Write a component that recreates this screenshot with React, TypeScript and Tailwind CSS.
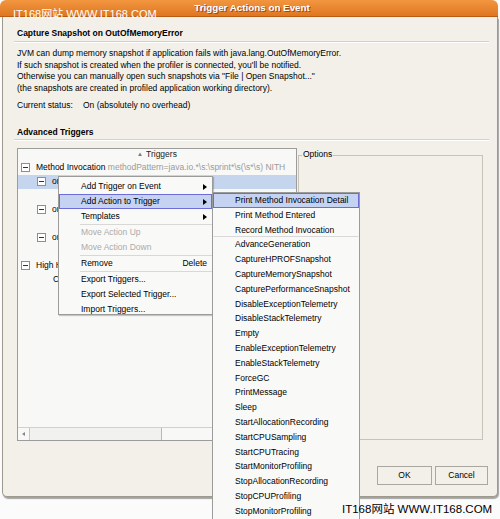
import React from 'react';

const actions = [
  'Print Method Invocation Detail',
  'Print Method Entered',
  'Record Method Invocation',
  'AdvanceGeneration',
  'CaptureHPROFSnapshot',
  'CaptureMemorySnapshot',
  'CapturePerformanceSnapshot',
  'DisableExceptionTelemetry',
  'DisableStackTelemetry',
  'Empty',
  'EnableExceptionTelemetry',
  'EnableStackTelemetry',
  'ForceGC',
  'PrintMessage',
  'Sleep',
  'StartAllocationRecording',
  'StartCPUSampling',
  'StartCPUTracing',
  'StartMonitorProfiling',
  'StopAllocationRecording',
  'StopCPUProfiling',
  'StopMonitorProfiling',
];

function Minus() {
  return (
    <span className="inline-flex w-[9px] h-[9px] shrink-0 items-center justify-center border border-[#8e8e8e] bg-white">
      <span className="w-[5px] h-px bg-[#333]" />
    </span>
  );
}

function Arrow() {
  return <span className="w-0 h-0 border-y-[3.5px] border-y-transparent border-l-[4px] border-l-black" />;
}

interface TreeRowProps {
  level: number;
  expander?: boolean;
  selected?: boolean;
  children?: React.ReactNode;
}

function TreeRow({ level, expander, selected, children }: TreeRowProps) {
  const indent = level === 0 ? 'pl-[3px]' : level === 1 ? 'pl-[19px]' : 'pl-[35px]';
  return (
    <div className={`h-[14px] flex items-center whitespace-nowrap overflow-hidden ${indent} ${selected ? 'bg-[#c6d5ee]' : ''}`}>
      {expander && <Minus />}
      <span className={expander ? 'ml-[6px]' : ''}>{children}</span>
    </div>
  );
}

function MenuItem({ label, hint, arrow, disabled, active }: { label: string; hint?: string; arrow?: boolean; disabled?: boolean; active?: boolean }) {
  return (
    <div
      className={`h-[15px] flex items-center pl-[21px] pr-[4px] border ${
        active ? 'bg-[#c5d2f2] border-[#6d6dd8]' : 'border-transparent'
      } ${disabled ? 'text-[#ababab]' : 'text-black'}`}
    >
      <span className="flex-1">{label}</span>
      {hint && <span>{hint}</span>}
      {arrow && <Arrow />}
    </div>
  );
}

export default function App() {
  return (
    <div className="relative w-[500px] h-[519px] overflow-hidden bg-[#fbfbfb] font-['Liberation_Sans',Arial,sans-serif] text-[8.5px] text-black">
      {/* Dialog */}
      <div className="w-[498px] h-[497px] flex flex-col">
        <div className="h-[17px] rounded-t-[6px] bg-gradient-to-b from-[#f2963f] to-[#e0761f] border-b border-[#b95b13] flex items-center justify-center">
          <span className="ml-[6px] text-white font-bold text-[9.8px] [text-shadow:1px_1px_0_#a04a0a]">Trigger Actions on Event</span>
        </div>
        <div className="flex-1 ml-[2px] flex flex-col bg-[#f2f0e9] border-x border-b border-[#9d998d] rounded-b-[5px] shadow-[1px_2px_1px_rgba(0,0,0,0.35)] pl-[11px] pr-[8px] pt-[10px]">
          <div className="pl-[3px] leading-[12px] font-bold">Capture Snapshot on OutOfMemoryError</div>
          <div className="mt-[2px] h-[2px] border-t border-[#d4d0c4] border-b border-b-white" />
          <div className="pl-[3px] mt-[5px] leading-[11.5px]">
            <div>JVM can dump memory snapshot if application fails with java.lang.OutOfMemoryError.</div>
            <div>If such snapshot is created when the profiler is connected, you'll be notified.</div>
            <div>Otherwise you can manually open such snapshots via "File | Open Snapshot..."</div>
            <div>(the snapshots are created in profiled application working directory).</div>
          </div>
          <div className="pl-[3px] mt-[6px] leading-[11.5px] flex">
            <span className="w-[66px]">Current status:</span>
            <span>On (absolutely no overhead)</span>
          </div>
          <div className="pl-[3px] mt-[14px] leading-[12px] font-bold">Advanced Triggers</div>
          <div className="mt-[1px] h-[2px] border-t border-[#d4d0c4] border-b border-b-white" />

          <div className="mt-[7px] flex">
            {/* Trigger tree */}
            <div className="ml-[3px] w-[280px] h-[293px] border border-[#9c9c9c] bg-[#f8f8f6] flex flex-col">
              <div className="h-[12px] flex items-center justify-center gap-[3px] text-[#222]">
                <span className="text-[6px] text-[#777]">▲</span>
                <span>Triggers</span>
              </div>
              <TreeRow level={0} expander>
                Method Invocation{' '}
                <span className="text-[#9a9a9a]">methodPattern=java.io.*\s:\sprint*\s(\s*\s) NITH</span>
              </TreeRow>
              <TreeRow level={1} expander selected>
                onEnter
              </TreeRow>
              <TreeRow level={2} />
              <TreeRow level={1} expander>
                onReturn
              </TreeRow>
              <TreeRow level={2} />
              <TreeRow level={1} expander>
                onException
              </TreeRow>
              <TreeRow level={2} />
              <TreeRow level={0} expander>
                High Heap
              </TreeRow>
              <TreeRow level={2}>Capture</TreeRow>
              <div className="flex-1" />
              <div className="h-[13px] flex border-t border-[#d0d0cc]">
                <div className="w-[12px] flex items-center justify-center border-r border-[#c8c8c4]">
                  <span className="w-0 h-0 border-y-[2.5px] border-y-transparent border-r-[3px] border-r-[#888]" />
                </div>
                <div className="w-[132px] border-r border-[#b8b8b4] bg-[#f1f1ef]" />
                <div className="flex-1" />
              </div>
            </div>

            {/* Options group */}
            <div className="relative ml-[1px] w-[185px] h-[292px] pt-[7px]">
              <div className="h-full border border-[#c7c3b7]" />
              <span className="absolute left-[4px] top-[1px] px-px leading-[11px] bg-[#f2f0e9]">Options</span>
            </div>
          </div>

          <div className="mt-[25px] flex justify-end gap-[3px] pr-[1px]">
            <button className="w-[55px] h-[19px] border border-[#a9a79f] bg-[#f2f0e9] text-[8.5px]">OK</button>
            <button className="w-[53px] h-[19px] border border-[#a9a79f] bg-[#f2f0e9] text-[8.5px]">Cancel</button>
          </div>
        </div>
      </div>

      {/* Context menu */}
      <div className="absolute left-[58px] top-[176px] w-[155px] h-[139px] py-[2px] bg-[#f9f9f8] border border-[#9b9b9b] shadow-[1px_1px_1px_rgba(0,0,0,0.2)]">
        <MenuItem label="Add Trigger on Event" arrow />
        <MenuItem label="Add Action to Trigger" arrow active />
        <MenuItem label="Templates" arrow />
        <div className="ml-[21px] h-0 border-t border-[#d8d8d8]" />
        <MenuItem label="Move Action Up" disabled />
        <MenuItem label="Move Action Down" disabled />
        <div className="ml-[21px] h-0 border-t border-[#d8d8d8]" />
        <MenuItem label="Remove" hint="Delete" />
        <div className="ml-[21px] h-0 border-t border-[#d8d8d8]" />
        <MenuItem label="Export Triggers..." />
        <MenuItem label="Export Selected Trigger..." />
        <MenuItem label="Import Triggers..." />
      </div>

      {/* Sub menu */}
      <div className="absolute left-[212px] top-[192px] w-[148px] h-[340px] bg-[#f9f9f8] border border-[#9b9b9b]">
        {actions.map((a, i) => (
          <div
            key={a}
            className={`h-[14.8px] flex items-center pl-[21px] border ${
              i === 0 ? 'bg-[#c5d2f2] border-[#6d6dd8]' : 'border-transparent'
            } ${i === 2 ? 'border-b-[#d8d8d8]' : ''}`}
          >
            {a}
          </div>
        ))}
      </div>

      {/* Watermarks */}
      <span className="absolute left-[13px] top-[8px] text-[11px] leading-[13px] text-white font-['Liberation_Sans','Noto_Sans_CJK_SC',sans-serif]">
        IT168网站 WWW.IT168.COM
      </span>
      <span className="absolute left-[342px] top-[502px] text-[11.5px] leading-[14px] text-black font-['Liberation_Sans','Noto_Sans_CJK_SC',sans-serif]">
        IT168网站 WWW.IT168.COM
      </span>
    </div>
  );
}
